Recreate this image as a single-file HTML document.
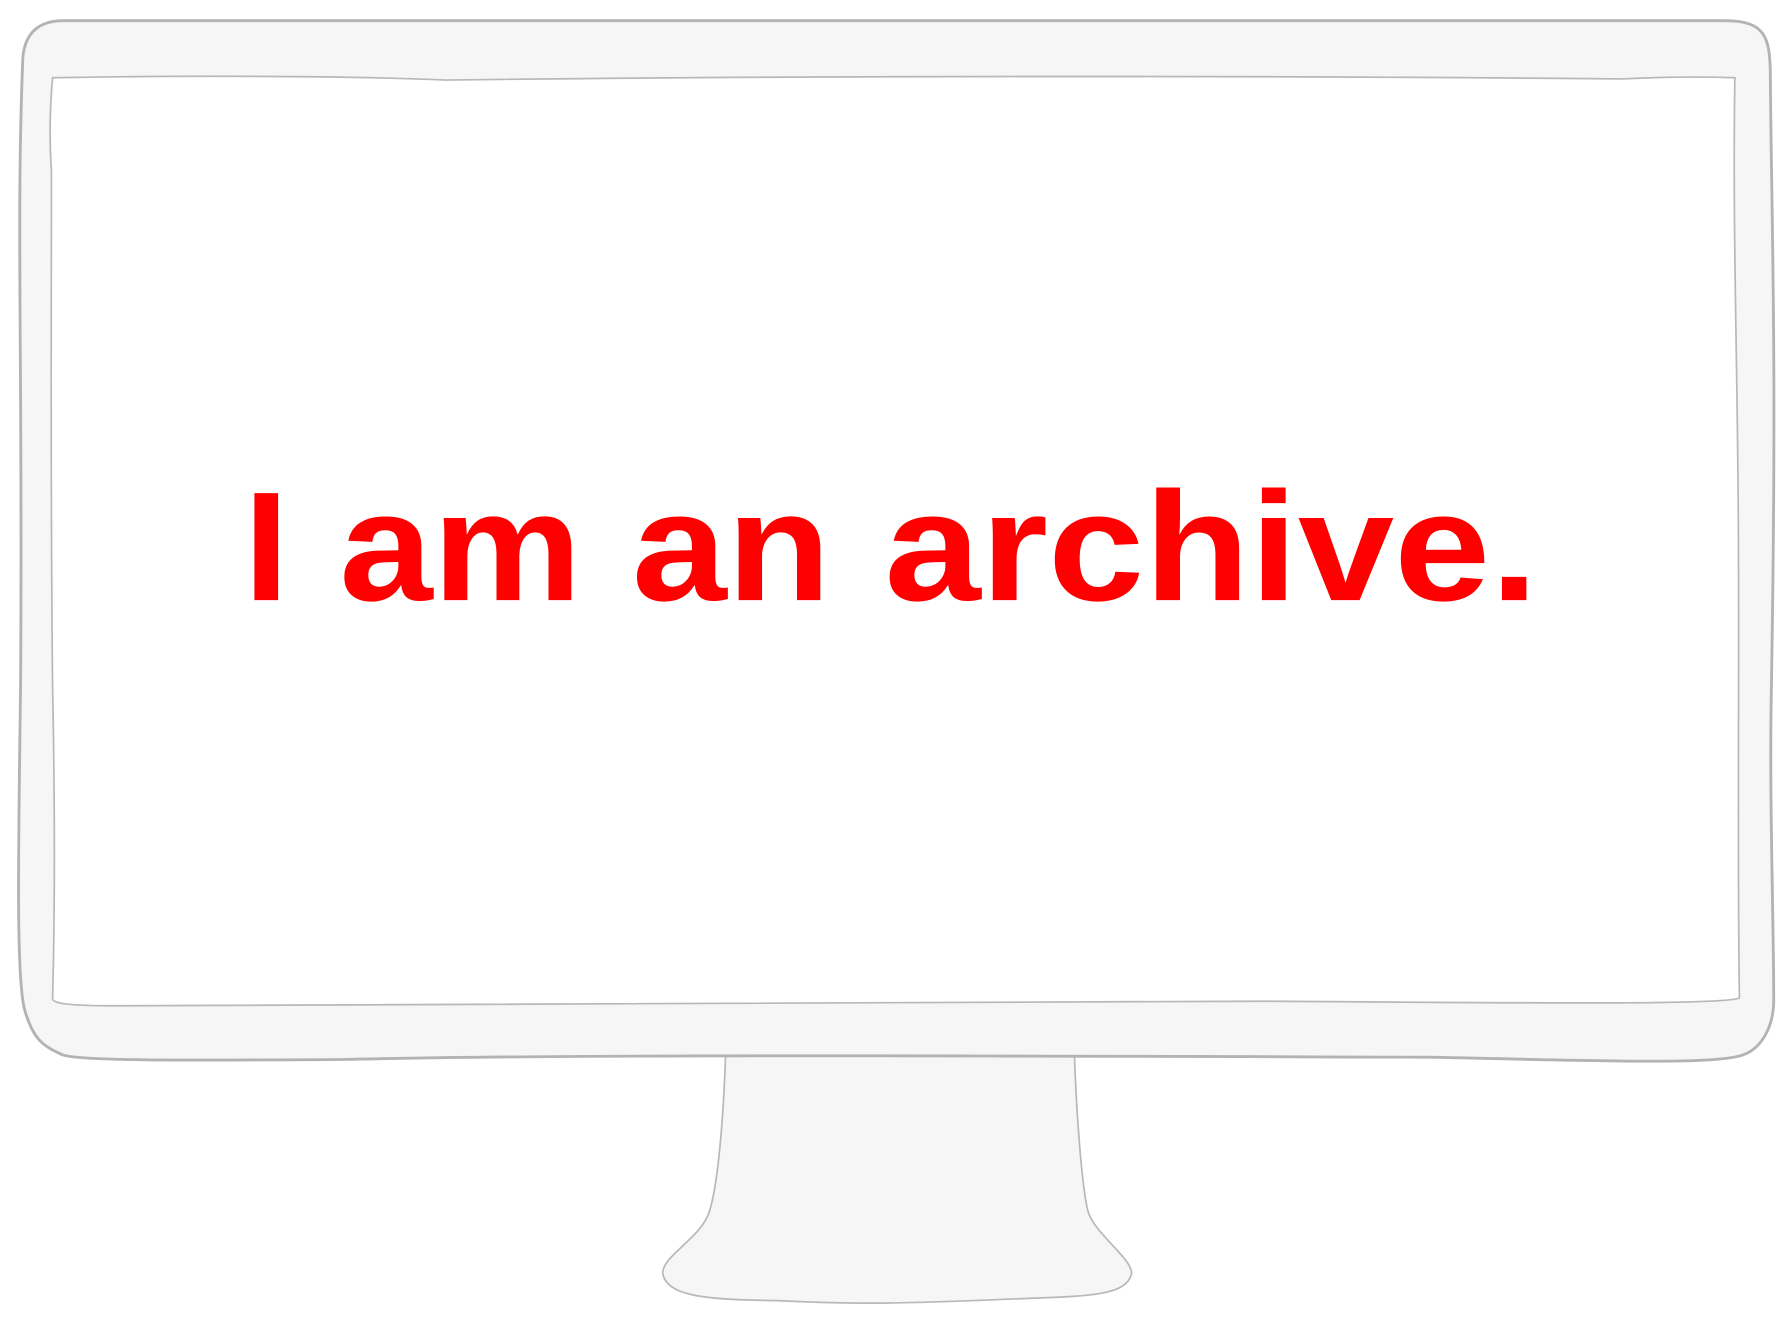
<!DOCTYPE html>
<html><head><meta charset="utf-8"><style>
html,body{margin:0;padding:0;background:#fff;width:1792px;height:1327px;overflow:hidden}
svg{display:block}
</style></head><body>
<svg width="1792" height="1327" viewBox="0 0 1568 1161" xmlns="http://www.w3.org/2000/svg">
<path d="M635 920 C633 980 628 1040 620 1062 C612 1084 578 1100 580 1115 C585 1135 620 1137 680 1138 C760 1142 800 1140 900 1136 C960 1134 985 1132 990 1115 C992 1102 958 1080 952 1060 C947 1040 942 980 940 920 Z" fill="#f6f6f6" stroke="#b8b8b8" stroke-width="1.5"/>
<path d="M55 18 C400 16 900 20 1510 18 C1545 18 1548 34 1549 60 C1550 200 1555 300 1550 600 C1548 700 1552 800 1552 875 C1552 900 1540 918 1525 923 C1500 932 1400 928 1250 925 C900 924 500 922 300 927 C150 928 70 928 55 923 C40 916 30 912 22 885 C14 860 16 750 18 600 C20 300 14 200 20 50 C22 28 35 18 55 18 Z" fill="#f6f6f6" stroke="#b3b3b3" stroke-width="2.5"/>
<path d="M46 68 C150 66 300 66 390 70 C700 66 1100 66 1420 69 C1460 67 1490 67 1518 68 C1516 200 1520 300 1521 450 C1522 600 1520 750 1522 873 C1515 880 1300 877 1100 876 C700 878 300 877 100 880 C60 880 47 878 46 874 C48 800 48 700 46 600 C44 400 45 300 45 150 C43 120 44 90 46 68 Z" fill="#fff" stroke="#b8b8b8" stroke-width="1.5"/>
<g font-family="Liberation Sans, sans-serif" font-weight="bold" font-size="136" fill="#ff0000">
<text x="213" y="525" textLength="40" lengthAdjust="spacingAndGlyphs">I</text>
<text x="297" y="525" textLength="212" lengthAdjust="spacingAndGlyphs">am</text>
<text x="553" y="525" textLength="174" lengthAdjust="spacingAndGlyphs">an</text>
<text x="774" y="525" textLength="572" lengthAdjust="spacingAndGlyphs">archive.</text>
</g>
</svg>
</body></html>
